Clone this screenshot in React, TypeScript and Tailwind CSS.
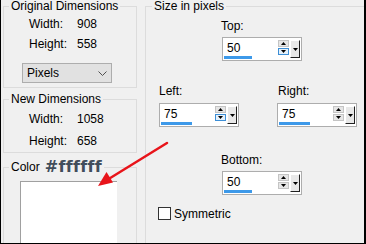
import React from "react";

const font = "font-['Liberation_Sans',Arial,sans-serif]";

function Tri({ up, className }: { up?: boolean; className?: string }) {
  return (
    <svg width="5" height="3" viewBox="0 0 5 3" className={className}>
      {up ? <polygon points="0,3 5,3 2.5,0" fill="#000" /> : <polygon points="0,0 5,0 2.5,3" fill="#000" />}
    </svg>
  );
}

function Spin({ value, barClass, hot }: { value: string; barClass: string; hot?: boolean }) {
  return (
    <div className="w-[80px] h-[24px] border border-[#adadad] bg-white flex items-start pt-[2px]">
      <div className="flex-1 flex flex-col pt-[1px]">
        <span className="pl-[4px] text-[12px] leading-[14px] text-black">{value}</span>
        <div className={"ml-[1px] mt-[1px] h-[3px] bg-[#3d99e9] " + barClass} />
      </div>
      <div className="w-[11px] flex flex-col gap-[1px]">
        <div className="h-[7px] bg-[#e6e6e6] border border-[#c4c4c4] flex items-center justify-center">
          <Tri up />
        </div>
        <div
          className={
            "h-[7px] border flex items-center justify-center " +
            (hot ? "bg-[#e5f1fb] border-[#3c8ed6]" : "bg-[#e6e6e6] border-[#c4c4c4]")
          }
        >
          <Tri />
        </div>
      </div>
      <div className="ml-[1px] mr-[1px] w-[10px] h-[18px] bg-[#e8e8e8] border-l border-t border-l-white border-t-white border-r border-b border-r-[#202020] border-b-[#202020] flex items-center justify-center">
        <Tri />
      </div>
    </div>
  );
}

export default function App() {
  return (
    <div
      className={
        "relative w-[366px] h-[244px] bg-[#f0f0f0] border-l border-r-2 border-b border-black flex overflow-hidden text-[12px] text-black " +
        font
      }
    >
      {/* left column */}
      <div className="w-[144px] shrink-0 flex flex-col">
        <fieldset className="ml-[2px] w-[134px] border border-[#dcdcdc] pb-[4px]">
          <legend className="ml-[5px] px-[2px] leading-[12px]">Original Dimensions</legend>
          <div className="grid grid-cols-[48px_auto] pl-[25px]">
            <span className="h-[20px] leading-[20px] mt-[2px]">Width:</span>
            <span className="h-[20px] leading-[20px] mt-[2px]">908</span>
            <span className="h-[20px] leading-[20px]">Height:</span>
            <span className="h-[20px] leading-[20px]">558</span>
          </div>
          <div className="ml-[18px] mt-[9px] w-[90px] h-[20px] bg-[#e1e1e1] border border-[#adadad] flex items-center pl-[4px] pr-[4px]">
            <span className="flex-1">Pixels</span>
            <svg width="9" height="5" viewBox="0 0 9 5">
              <polyline points="0.5,0.5 4.5,4.5 8.5,0.5" fill="none" stroke="#505050" strokeWidth="1" />
            </svg>
          </div>
        </fieldset>

        <fieldset className="ml-[2px] mt-[5px] w-[134px] border border-[#dcdcdc] pb-[1px]">
          <legend className="ml-[5px] px-[2px] leading-[12px]">New Dimensions</legend>
          <div className="grid grid-cols-[48px_auto] pl-[25px] pt-[4px] gap-y-[2px]">
            <span className="h-[20px] leading-[20px]">Width:</span>
            <span className="h-[20px] leading-[20px]">1058</span>
            <span className="h-[20px] leading-[20px]">Height:</span>
            <span className="h-[20px] leading-[20px]">658</span>
          </div>
        </fieldset>

        <fieldset className="ml-[2px] mt-[5px] w-[134px] border border-[#dcdcdc]">
          <legend className="ml-[5px] px-[2px] h-[18px] flex items-center">
            <span className="leading-[14px]">Color</span>
            <span className="ml-[5px] font-['DejaVu_Sans',sans-serif] font-bold text-[16px] leading-[18px] tracking-[0.3px] text-[#414d5b]">
              #ffffff
            </span>
          </legend>
          <div className="ml-[16px] mt-[5px] w-[97px] h-[70px] bg-white border-l border-t border-[#a0a0a0]" />
        </fieldset>
      </div>

      {/* right group */}
      <fieldset className="w-[230px] shrink-0 h-[260px] border border-[#dcdcdc]">
        <legend className="ml-[6px] px-[2px] leading-[12px]">Size in pixels</legend>
        <div className="flex flex-col">
          <div className="pl-[75px] mt-[7px] leading-[14px]">Top:</div>
          <div className="pl-[76px] mt-[4px]">
            <Spin value="50" barClass="w-[28px]" hot />
          </div>

          <div className="mt-[23px] pl-[13px] grid grid-cols-[118px_auto]">
            <div className="flex flex-col">
              <span className="leading-[14px]">Left:</span>
              <div className="mt-[5px]">
                <Spin value="75" barClass="w-[31px]" hot />
              </div>
            </div>
            <div className="flex flex-col">
              <span className="leading-[14px] pl-[1px]">Right:</span>
              <div className="mt-[5px]">
                <Spin value="75" barClass="w-[31px]" />
              </div>
            </div>
          </div>

          <div className="pl-[75px] mt-[26px] leading-[14px]">Bottom:</div>
          <div className="pl-[76px] mt-[4px]">
            <Spin value="50" barClass="w-[28px]" />
          </div>

          <div className="mt-[12px] pl-[12px] flex items-center h-[13px]">
            <div className="w-[13px] h-[13px] bg-white border border-[#333333]" />
            <span className="ml-[3px] leading-[14px]">Symmetric</span>
          </div>
        </div>
      </fieldset>

      {/* red annotation arrow */}
      <svg className="absolute left-0 top-0 pointer-events-none" width="366" height="244" viewBox="0 0 366 244">
        <line x1="166" y1="143" x2="106" y2="180" stroke="#e8141a" strokeWidth="2.5" strokeLinecap="round" />
        <polygon points="97,186 112,182.5 105.5,172" fill="#e8141a" />
      </svg>
    </div>
  );
}
